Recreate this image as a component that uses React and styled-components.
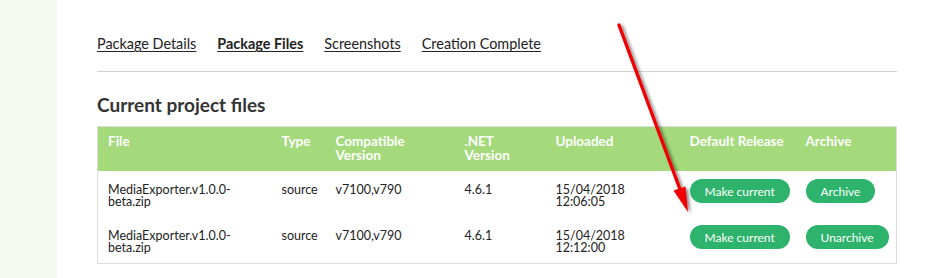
import React from "react";
import styled, { createGlobalStyle } from "styled-components";

const GlobalStyle = createGlobalStyle`
  html, body {
    margin: 0;
    padding: 0;
    background: #ffffff;
  }
  body {
    font-family: "Lato", "Liberation Sans", sans-serif;
    color: #333;
  }
`;

const tabs = [
  { label: "Package Details" },
  { label: "Package Files", active: true },
  { label: "Screenshots" },
  { label: "Creation Complete" },
];

const columns = [
  { title: "File", width: 174 },
  { title: "Type", width: 54 },
  { title: "Compatible Version", width: 129 },
  { title: ".NET Version", width: 91 },
  { title: "Uploaded", width: 134 },
  { title: "Default Release", width: 116 },
  { title: "Archive", width: 101 },
];

const files = [
  {
    type: "source",
    compat: "v7100,v790",
    net: "4.6.1",
    date: "15/04/2018",
    time: "12:06:05",
    archived: false,
  },
  {
    type: "source",
    compat: "v7100,v790",
    net: "4.6.1",
    date: "15/04/2018",
    time: "12:12:00",
    archived: true,
  },
];

export default function App() {
  return (
    <Page>
      <GlobalStyle />
      <Sidebar />
      <Main>
        <Tabs>
          {tabs.map((t) => (
            <Tab key={t.label} $active={t.active}>
              {t.label}
            </Tab>
          ))}
        </Tabs>
        <Divider />
        <Heading>Current project files</Heading>
        <Table>
          <colgroup>
            {columns.map((c) => (
              <col key={c.title} style={{ width: c.width }} />
            ))}
          </colgroup>
          <thead>
            <tr>
              {columns.map((c) => (
                <Th key={c.title}>{c.title}</Th>
              ))}
            </tr>
          </thead>
          <tbody>
            {files.map((f, i) => (
              <Row key={i}>
                <Td>
                  MediaExporter.v1.0.0-
                  <br />
                  beta.zip
                </Td>
                <Td>{f.type}</Td>
                <Td>{f.compat}</Td>
                <Td>{f.net}</Td>
                <Td>
                  {f.date}
                  <br />
                  {f.time}
                </Td>
                <Td $button>
                  <Pill>Make current</Pill>
                </Td>
                <Td $button>
                  <Pill>{f.archived ? "Unarchive" : "Archive"}</Pill>
                </Td>
              </Row>
            ))}
          </tbody>
        </Table>
      </Main>
      <Arrow width="930" height="278" viewBox="0 0 930 278">
        <defs>
          <filter id="shadow" x="-20%" y="-20%" width="140%" height="140%">
            <feDropShadow dx="2.5" dy="1.5" stdDeviation="1.6" floodColor="#000" floodOpacity="0.45" />
          </filter>
        </defs>
        <g filter="url(#shadow)">
          <line x1="619" y1="25" x2="681" y2="192" stroke="#f00000" strokeWidth="3.4" strokeLinecap="round" />
          <polygon points="688,212 673.5,190.5 685.5,186.5" fill="#f00000" />
        </g>
      </Arrow>
    </Page>
  );
}

const Page = styled.div`
  position: relative;
  display: flex;
  width: 930px;
  height: 278px;
  overflow: hidden;
`;

const Sidebar = styled.div`
  width: 57px;
  flex-shrink: 0;
  background: #f5f9f0;
`;

const Main = styled.div`
  padding: 34px 0 0 40px;
  width: 800px;
`;

const Tabs = styled.div`
  display: flex;
  gap: 21px;
  height: 24px;
  align-items: flex-start;
`;

const Tab = styled.a`
  font-size: 14.4px;
  line-height: 20px;
  color: #222;
  text-decoration: underline;
  text-underline-offset: 2px;
  font-weight: ${(p) => (p.$active ? 700 : 400)};
  cursor: pointer;
`;

const Divider = styled.div`
  margin-top: 13px;
  height: 1px;
  background: #d2d2d2;
`;

const Heading = styled.h3`
  margin: 21px 0 0;
  font-size: 19px;
  line-height: 24px;
  font-weight: 700;
  color: #333;
  height: 33px;
`;

const Table = styled.table`
  border-collapse: collapse;
  table-layout: fixed;
  width: 800px;
  border: 1px solid #dcdcdc;
`;

const Th = styled.th`
  background: #a4da7b;
  color: #fff;
  font-size: 13.5px;
  line-height: 14px;
  font-weight: 700;
  text-align: left;
  vertical-align: top;
  padding: 7px 4px 9px 10px;
  height: 28px;
`;

const Row = styled.tr`
  height: 46px;
`;

const Td = styled.td`
  font-size: 12.5px;
  line-height: 12px;
  color: #222;
  vertical-align: top;
  padding: ${(p) => (p.$button ? "8px 4px 0 10px" : "13px 4px 0 10px")};
  white-space: nowrap;
`;

const Pill = styled.button`
  font-family: "Lato", "Liberation Sans", sans-serif;
  font-size: 12px;
  height: 24px;
  padding: 0 15px;
  border: none;
  border-radius: 12px;
  background: #2db36b;
  color: #fff;
  cursor: pointer;
`;

const Arrow = styled.svg`
  position: absolute;
  left: 0;
  top: 0;
  pointer-events: none;
`;
